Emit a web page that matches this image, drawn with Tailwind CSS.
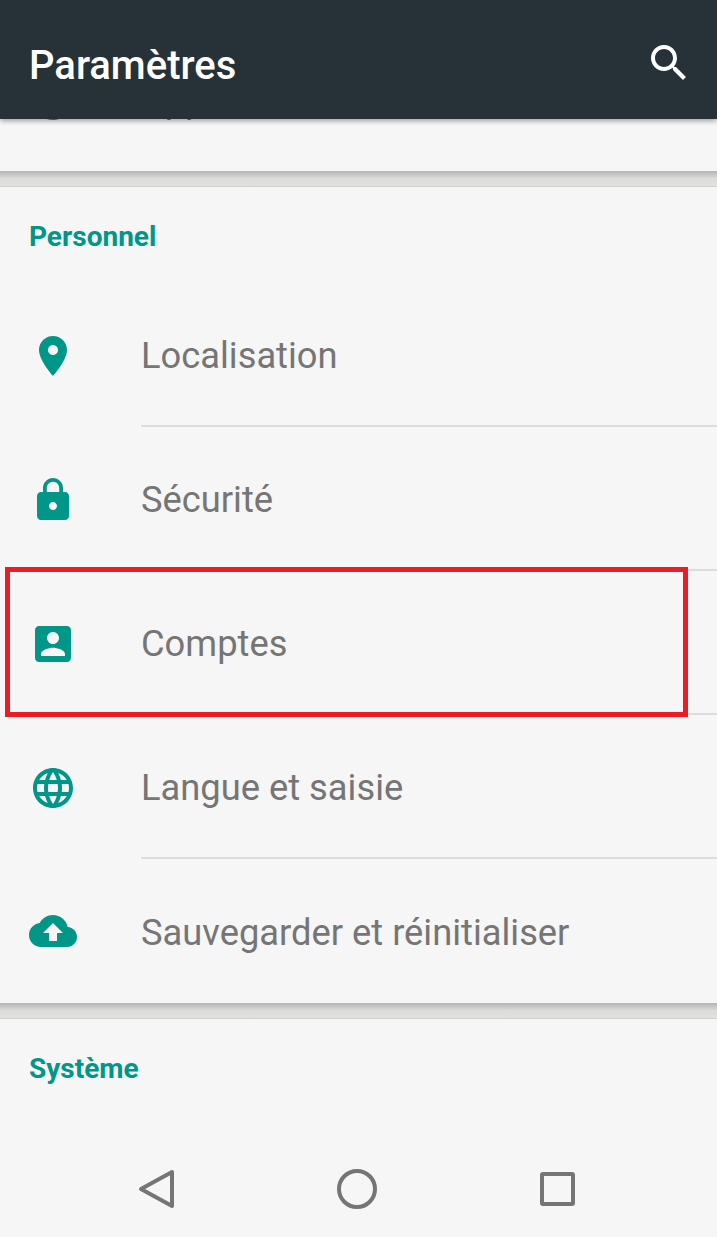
<!DOCTYPE html>
<html lang="fr">
<head>
<meta charset="UTF-8" />
<meta name="viewport" content="width=device-width, initial-scale=1" />
<title>Paramètres</title>
<script src="https://cdn.jsdelivr.net/npm/@tailwindcss/browser@4"></script>
</head>
<body class="bg-[#f6f6f6] font-['Roboto',sans-serif]">

<div class="relative w-[717px] h-[1237px] flex flex-col overflow-hidden">

  <!-- app bar -->
  <header class="relative z-10 h-[119px] shrink-0 bg-[#263238] flex items-center justify-between pl-[29px] pr-[24px] shadow-[0_2px_5px_rgba(0,0,0,0.35)]">
    <h1 class="text-[40px] font-medium text-white pt-[13px]">Paramètres</h1>
    <svg class="w-12 h-12 fill-white mt-[7px]" viewBox="0 0 24 24"><path d="M15.5 14h-.79l-.28-.27C15.41 12.59 16 11.11 16 9.5 16 5.91 13.09 3 9.5 3S3 5.91 3 9.5 5.91 16 9.5 16c1.61 0 3.09-.59 4.23-1.57l.27.28v.79l5 4.99L20.49 19l-4.99-5zm-6 0C7.01 14 5 11.99 5 9.5S7.01 5 9.5 5 14 7.01 14 9.5 11.99 14 9.5 14z"/></svg>
  </header>

  <!-- settings list, scrolled -->
  <main class="flex-1 overflow-hidden">
    <div class="-mt-[92px]">
      <div class="h-[144px] pt-[2px] flex items-center">
        <div class="w-[106px] flex justify-center">
          <svg class="w-12 h-12 fill-[#009688]" viewBox="0 0 24 24"><circle cx="12" cy="12" r="10"/></svg>
        </div>
        <span class="ml-[35px] text-[36.3px] text-[#757575]">Applications</span>
      </div>
    </div>

    <div class="h-[16px] bg-gradient-to-b from-[#b4b4b2] via-[#dcdcda] to-[#e0e0de] border-b border-[#d2d2d0]"></div>

    <section>
      <h2 class="h-[96px] pl-[29px] pt-[32px] text-[28px] leading-[36px] font-bold text-[#009688]">Personnel</h2>

      <div class="h-[144px] flex items-center">
        <div class="w-[106px] pt-[1px] flex justify-center">
          <svg class="w-12 h-12 fill-[#009688]" viewBox="0 0 24 24"><path d="M12 2C8.13 2 5 5.13 5 9c0 5.25 7 13 7 13s7-7.75 7-13c0-3.87-3.13-7-7-7zm0 9.5c-1.38 0-2.5-1.12-2.5-2.5s1.12-2.5 2.5-2.5 2.5 1.12 2.5 2.5-1.12 2.5-2.5 2.5z"/></svg>
        </div>
        <div class="ml-[35px] flex-1 h-full pt-[4px] flex items-center border-b-2 border-[#dcdcdc]">
          <span class="text-[36.3px] text-[#757575]">Localisation</span>
        </div>
      </div>

      <div class="h-[144px] flex items-center">
        <div class="w-[106px] pt-[1px] flex justify-center">
          <svg class="w-12 h-12 fill-[#009688]" viewBox="0 0 24 24"><path d="M18 8h-1V6c0-2.76-2.24-5-5-5S7 3.24 7 6v2H6c-1.1 0-2 .9-2 2v10c0 1.1.9 2 2 2h12c1.1 0 2-.9 2-2V10c0-1.1-.9-2-2-2zm-6 9c-1.1 0-2-.9-2-2s.9-2 2-2 2 .9 2 2-.9 2-2 2zm3.1-9H8.9V6c0-1.71 1.39-3.1 3.1-3.1 1.71 0 3.1 1.39 3.1 3.1v2z"/></svg>
        </div>
        <div class="ml-[35px] flex-1 h-full pt-[4px] flex items-center border-b-2 border-[#dcdcdc]">
          <span class="text-[36.3px] text-[#757575]">Sécurité</span>
        </div>
      </div>

      <div class="h-[144px] flex items-center">
        <div class="w-[106px] pt-[1px] flex justify-center">
          <svg class="w-12 h-12 fill-[#009688]" viewBox="0 0 24 24"><path d="M3 5v14c0 1.1.89 2 2 2h14c1.1 0 2-.9 2-2V5c0-1.1-.9-2-2-2H5c-1.11 0-2 .9-2 2zm12 4c0 1.66-1.34 3-3 3s-3-1.34-3-3 1.34-3 3-3 3 1.34 3 3zm-9 8c0-2 4-3.1 6-3.1s6 1.1 6 3.1v1H6v-1z"/></svg>
        </div>
        <div class="ml-[35px] flex-1 h-full pt-[4px] flex items-center border-b-2 border-[#dcdcdc]">
          <span class="text-[36.3px] text-[#757575]">Comptes</span>
        </div>
      </div>

      <div class="h-[144px] flex items-center">
        <div class="w-[106px] pt-[1px] flex justify-center">
          <svg class="w-12 h-12 fill-[#009688]" viewBox="0 0 24 24"><path d="M11.99 2C6.47 2 2 6.48 2 12s4.47 10 9.99 10C17.52 22 22 17.52 22 12S17.52 2 11.99 2zm6.93 6h-2.95c-.32-1.25-.78-2.45-1.38-3.56 1.84.63 3.37 1.91 4.33 3.56zM12 4.04c.83 1.2 1.48 2.53 1.91 3.96h-3.82c.43-1.43 1.08-2.76 1.91-3.96zM4.26 14C4.1 13.36 4 12.69 4 12s.1-1.36.26-2h3.38c-.08.66-.14 1.32-.14 2 0 .68.06 1.34.14 2H4.26zm.82 2h2.95c.32 1.25.78 2.45 1.38 3.56-1.84-.63-3.37-1.9-4.33-3.56zm2.95-8H5.08c.96-1.66 2.49-2.93 4.33-3.56C8.81 5.55 8.35 6.75 8.03 8zM12 19.96c-.83-1.2-1.48-2.53-1.91-3.96h3.82c-.43 1.43-1.08 2.76-1.91 3.96zM14.34 14H9.66c-.09-.66-.16-1.32-.16-2 0-.68.07-1.35.16-2h4.68c.09.65.16 1.32.16 2 0 .68-.07 1.34-.16 2zm.25 5.56c.6-1.11 1.06-2.31 1.38-3.56h2.95c-.96 1.65-2.49 2.93-4.33 3.56zM16.36 14c.08-.66.14-1.32.14-2 0-.68-.06-1.34-.14-2h3.38c.16.64.26 1.31.26 2s-.1 1.36-.26 2h-3.38z"/></svg>
        </div>
        <div class="ml-[35px] flex-1 h-full pt-[4px] flex items-center border-b-2 border-[#dcdcdc]">
          <span class="text-[36.3px] text-[#757575]">Langue et saisie</span>
        </div>
      </div>

      <div class="h-[144px] flex items-center">
        <div class="w-[106px] flex justify-center">
          <svg class="w-12 h-12 fill-[#009688]" viewBox="0 0 24 24"><path d="M19.35 10.04C18.67 6.59 15.64 4 12 4 9.11 4 6.6 5.64 5.35 8.04 2.34 8.36 0 10.91 0 14c0 3.31 2.69 6 6 6h13c2.76 0 5-2.24 5-5 0-2.64-2.05-4.78-4.65-4.96zM14 13v4h-4v-4H7l5-5 5 5h-3z"/></svg>
        </div>
        <div class="ml-[35px] flex-1 h-full pt-[4px] flex items-center">
          <span class="text-[36.3px] text-[#757575]">Sauvegarder et réinitialiser</span>
        </div>
      </div>
    </section>

    <div class="h-[16px] bg-gradient-to-b from-[#b4b4b2] via-[#dcdcda] to-[#e0e0de] border-b border-[#d2d2d0]"></div>

    <section>
      <h2 class="pl-[29px] pt-[32px] text-[28px] leading-[36px] font-bold text-[#009688]">Système</h2>
    </section>
  </main>

  <!-- navigation bar -->
  <nav class="h-[96px] shrink-0 bg-[#f6f6f6] flex items-center justify-center gap-[161px] pr-[3px]">
    <svg class="w-10 h-10 fill-none stroke-[#757575] stroke-[4]" stroke-linejoin="round" viewBox="0 0 40 40"><path d="M36 3 L5 20 L36 37 Z" /></svg>
    <svg class="w-10 h-10 fill-none stroke-[#757575] stroke-[4]" viewBox="0 0 40 40"><circle cx="20" cy="20" r="18"/></svg>
    <svg class="w-10 h-10 fill-none stroke-[#757575] stroke-[4]" stroke-linejoin="round" viewBox="0 0 40 40"><rect x="4" y="5" width="31" height="30" rx="1"/></svg>
  </nav>

  <!-- red highlight drawn over the screenshot -->
  <div class="absolute left-[5px] top-[567px] w-[683px] h-[150px] border-[5px] border-[#ed1c24]"></div>
</div>

</body>
</html>
